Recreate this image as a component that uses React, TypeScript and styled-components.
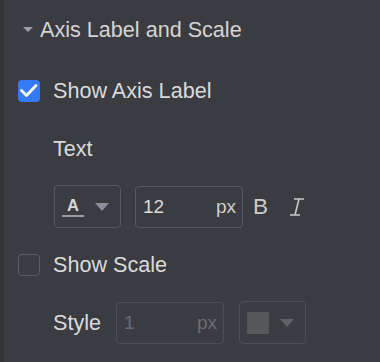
import React from "react";
import styled, { createGlobalStyle } from "styled-components";

const Global = createGlobalStyle`
  html, body { margin: 0; padding: 0; background: #3a3c41; }
  body { font-family: "Liberation Sans", Arial, sans-serif; }
`;

const Panel = styled.div`
  width: 380px;
  height: 362px;
  box-sizing: border-box;
  border-left: 4px solid #323438;
  padding-left: 14px;
  display: flex;
  flex-direction: column;
  background: #3a3c41;
  color: #dadada;
`;

const SectionHeader = styled.div`
  height: 60px;
  display: flex;
  align-items: center;
  gap: 7px;
  padding-left: 5px;
  font-size: 21.6px;
  line-height: 22px;
  color: #d4d4d4;
`;

const Caret = styled.span`
  width: 0;
  height: 0;
  border-left: 5.5px solid transparent;
  border-right: 5.5px solid transparent;
  border-top: 5px solid #9c9ea3;
  margin-top: -2px;
`;

const CheckRow = styled.div<{ $top: number }>`
  margin-top: ${(p) => p.$top}px;
  height: 22px;
  display: flex;
  align-items: center;
  gap: 13px;
  font-size: 21.6px;
  line-height: 22px;
`;

const Box = styled.span<{ $checked?: boolean }>`
  width: 22px;
  height: 22px;
  box-sizing: border-box;
  border-radius: 4px;
  background: ${(p) => (p.$checked ? "#3479f6" : "transparent")};
  border: ${(p) => (p.$checked ? "none" : "1px solid #5b5d62")};
  display: flex;
  align-items: center;
  justify-content: center;
`;

const SubLabel = styled.div<{ $top: number }>`
  margin-top: ${(p) => p.$top}px;
  padding-left: 35px;
  height: 22px;
  font-size: 21.6px;
  line-height: 22px;
`;

const ControlRow = styled.div<{ $top: number; $gap: number }>`
  margin-top: ${(p) => p.$top}px;
  padding-left: 36px;
  height: 43px;
  display: flex;
  align-items: center;
  gap: ${(p) => p.$gap}px;
`;

const RowLabel = styled.span`
  font-size: 21.6px;
  line-height: 22px;
  margin-left: -1px;
`;

const ColorBox = styled.div<{ $disabled?: boolean }>`
  width: 67px;
  height: 43px;
  box-sizing: border-box;
  border: 1px solid ${(p) => (p.$disabled ? "#4c4e54" : "#56595e")};
  border-radius: 4px;
  display: flex;
  align-items: center;
  padding-left: 7px;
  gap: 11px;
`;

const FontGlyph = styled.span`
  width: 22px;
  display: flex;
  flex-direction: column;
  align-items: center;
  font-size: 16.5px;
  font-weight: bold;
  line-height: 14px;
  color: #d6d6d6;
  margin-top: 2px;
  &::after {
    content: "";
    width: 22px;
    height: 2px;
    margin-top: 3px;
    background: #9a9a9c;
  }
`;

const Swatch = styled.span`
  width: 22px;
  height: 22px;
  background: #55575b;
`;

const DropTri = styled.span<{ $disabled?: boolean }>`
  width: 0;
  height: 0;
  border-left: 7px solid transparent;
  border-right: 7px solid transparent;
  border-top: 8px solid ${(p) => (p.$disabled ? "#5e626c" : "#8c909b")};
`;

const NumInput = styled.div<{ $disabled?: boolean }>`
  width: 108px;
  height: 42px;
  box-sizing: border-box;
  border: 1px solid ${(p) => (p.$disabled ? "#4c4e54" : "#56595e")};
  border-radius: 4px;
  display: flex;
  align-items: center;
  justify-content: space-between;
  padding: 0 6px 0 7px;
  font-size: 19px;
  color: ${(p) => (p.$disabled ? "#696c71" : "#dadada")};
`;

const Unit = styled.span<{ $disabled?: boolean }>`
  color: ${(p) => (p.$disabled ? "#6c6f74" : "#cfcfcf")};
`;

const StyleButton = styled.span`
  font-size: 22.5px;
  color: #cdcdcd;
  display: flex;
  align-items: center;
  margin-left: -4px;
  margin-right: 7px;
`;

const IconWrap = styled.span`
  display: flex;
  align-items: center;
`;

export default function App() {
  return (
    <>
      <Global />
      <Panel>
        <SectionHeader>
          <Caret />
          <span>Axis Label and Scale</span>
        </SectionHeader>

        <CheckRow $top={20}>
          <Box $checked>
            <svg width="22" height="22" viewBox="0 0 22 22">
              <path d="M3.5 10.5 L8.5 15.5 L18 5.5" fill="none" stroke="#fff" strokeWidth="2.8" strokeLinecap="round" strokeLinejoin="round" />
            </svg>
          </Box>
          <span>Show Axis Label</span>
        </CheckRow>

        <SubLabel $top={36}>Text</SubLabel>

        <ControlRow $top={25} $gap={14}>
          <ColorBox>
            <FontGlyph>A</FontGlyph>
            <DropTri />
          </ColorBox>
          <NumInput>
            <span>12</span>
            <Unit>px</Unit>
          </NumInput>
          <StyleButton>B</StyleButton>
          <IconWrap>
            <svg width="16" height="18" viewBox="0 0 16 18">
              <path d="M5 1 H15 M1 17 H11 M10 1 L6 17" fill="none" stroke="#c9c9c9" strokeWidth="1.6" />
            </svg>
          </IconWrap>
        </ControlRow>

        <CheckRow $top={26}>
          <Box />
          <span>Show Scale</span>
        </CheckRow>

        <ControlRow $top={25} $gap={15}>
          <RowLabel>Style</RowLabel>
          <NumInput $disabled>
            <span>1</span>
            <Unit $disabled>px</Unit>
          </NumInput>
          <ColorBox $disabled>
            <Swatch />
            <DropTri $disabled />
          </ColorBox>
        </ControlRow>
      </Panel>
    </>
  );
}
